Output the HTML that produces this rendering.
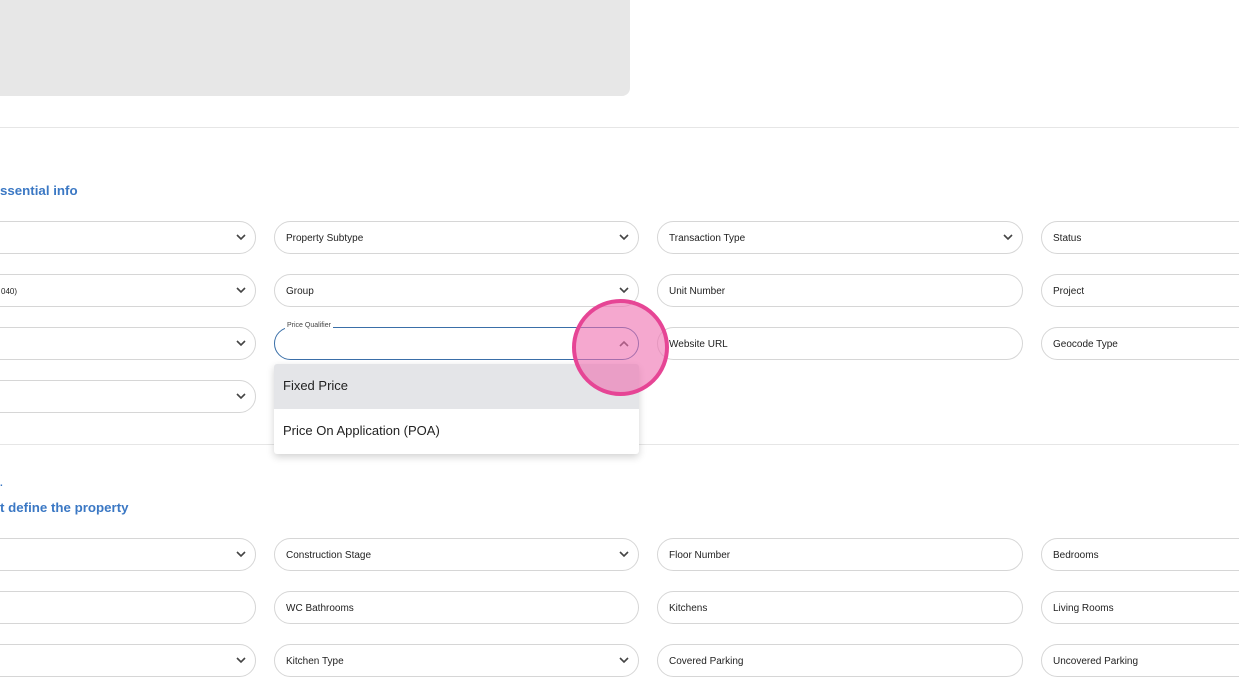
<!DOCTYPE html>
<html><head><style>
*{margin:0;padding:0;box-sizing:border-box}
body{width:1239px;height:693px;overflow:hidden;background:#fff;font-family:"Liberation Sans",Arial,sans-serif;position:relative}
.box{position:absolute;left:-10px;top:-10px;width:640px;height:106px;background:#e7e7e7;border-radius:0 0 8px 0}
.hr{position:absolute;left:0;width:1239px;height:1px;background:#e6e6e6}
.h{position:absolute;left:0;color:#3b78c4;font-weight:bold;font-size:13.3px}
.f{position:absolute;height:33px;border:1px solid #d6d6d6;border-radius:17px;font-size:10px;color:#222;padding-left:11px;line-height:33px;background:#fff}
.f svg{position:absolute;right:9px;top:12px}
.dd{position:absolute;left:274px;top:364px;width:365px;height:90px;background:#fff;box-shadow:0 3px 8px rgba(0,0,0,.18);border-radius:3px;overflow:hidden}
.dd div{height:45px;line-height:43px;padding-left:9px;font-size:13px;color:#222}
</style></head><body>
<div class="box"></div>
<div class="hr" style="top:127px"></div>
<div class="h" style="top:183px">ssential info</div>
<div class="hr" style="top:444px"></div>
<div class="h" style="top:478px;font-size:10px">.</div>
<div class="h" style="top:500px">t define the property</div>

<div class="f" style="left:-30px;top:221px;width:286px"><svg width="10" height="7"><path d="M1 1L5 5L9 1" stroke="#444" stroke-width="1.6" fill="none"/></svg></div>
<div class="f" style="left:274px;top:221px;width:365px">Property Subtype<svg width="10" height="7"><path d="M1 1L5 5L9 1" stroke="#444" stroke-width="1.6" fill="none"/></svg></div>
<div class="f" style="left:657px;top:221px;width:366px">Transaction Type<svg width="10" height="7"><path d="M1 1L5 5L9 1" stroke="#444" stroke-width="1.6" fill="none"/></svg></div>
<div class="f" style="left:1041px;top:221px;width:250px">Status</div>

<div class="f" style="left:-30px;top:274px;width:286px;font-size:8px;padding-left:30px">040)<svg width="10" height="7"><path d="M1 1L5 5L9 1" stroke="#444" stroke-width="1.6" fill="none"/></svg></div>
<div class="f" style="left:274px;top:274px;width:365px">Group<svg width="10" height="7"><path d="M1 1L5 5L9 1" stroke="#444" stroke-width="1.6" fill="none"/></svg></div>
<div class="f" style="left:657px;top:274px;width:366px">Unit Number</div>
<div class="f" style="left:1041px;top:274px;width:250px">Project</div>

<div class="f" style="left:-30px;top:327px;width:286px"><svg width="10" height="7"><path d="M1 1L5 5L9 1" stroke="#444" stroke-width="1.6" fill="none"/></svg></div>
<div class="f" style="left:274px;top:327px;width:365px;border-color:#3a6fa8"><svg width="10" height="7"><path d="M1 6L5 2L9 6" stroke="#444" stroke-width="1.6" fill="none"/></svg></div>
<div style="position:absolute;left:285px;top:322px;font-size:7px;color:#444;background:#fff;padding:0 2px">Price Qualifier</div>
<div class="f" style="left:657px;top:327px;width:366px">Website URL</div>
<div class="f" style="left:1041px;top:327px;width:250px">Geocode Type</div>

<div class="f" style="left:-30px;top:380px;width:286px"><svg width="10" height="7"><path d="M1 1L5 5L9 1" stroke="#444" stroke-width="1.6" fill="none"/></svg></div>

<div class="f" style="left:-30px;top:538px;width:286px"><svg width="10" height="7"><path d="M1 1L5 5L9 1" stroke="#444" stroke-width="1.6" fill="none"/></svg></div>
<div class="f" style="left:274px;top:538px;width:365px">Construction Stage<svg width="10" height="7"><path d="M1 1L5 5L9 1" stroke="#444" stroke-width="1.6" fill="none"/></svg></div>
<div class="f" style="left:657px;top:538px;width:366px">Floor Number</div>
<div class="f" style="left:1041px;top:538px;width:250px">Bedrooms</div>

<div class="f" style="left:-30px;top:591px;width:286px"></div>
<div class="f" style="left:274px;top:591px;width:365px">WC Bathrooms</div>
<div class="f" style="left:657px;top:591px;width:366px">Kitchens</div>
<div class="f" style="left:1041px;top:591px;width:250px">Living Rooms</div>

<div class="f" style="left:-30px;top:644px;width:286px"><svg width="10" height="7"><path d="M1 1L5 5L9 1" stroke="#444" stroke-width="1.6" fill="none"/></svg></div>
<div class="f" style="left:274px;top:644px;width:365px">Kitchen Type<svg width="10" height="7"><path d="M1 1L5 5L9 1" stroke="#444" stroke-width="1.6" fill="none"/></svg></div>
<div class="f" style="left:657px;top:644px;width:366px">Covered Parking</div>
<div class="f" style="left:1041px;top:644px;width:250px">Uncovered Parking</div>

<div class="dd"><div style="background:#e4e5e8">Fixed Price</div><div>Price On Application (POA)</div></div>

<div style="position:absolute;left:572px;top:299px;width:97px;height:97px;border-radius:50%;border:4px solid #e64595;background:rgba(238,110,175,.6)"></div>
</body></html>
